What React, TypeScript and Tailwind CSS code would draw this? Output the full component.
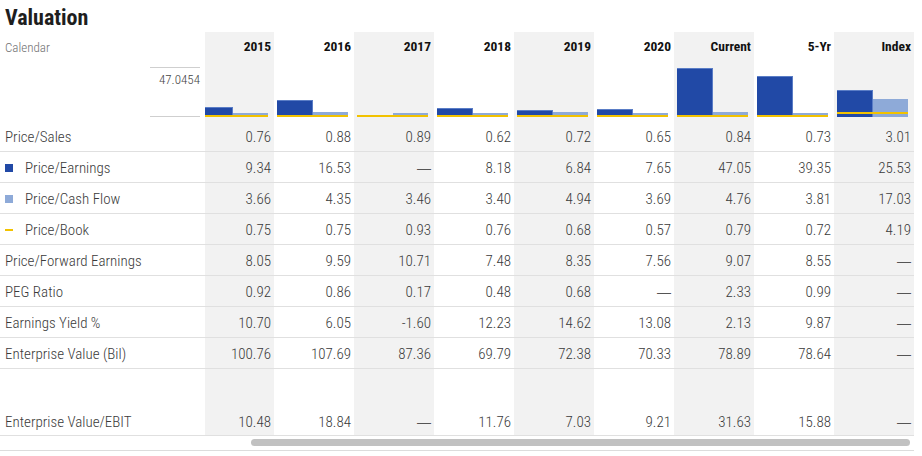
import React from "react";

const FONT = "font-['Roboto_Condensed','Liberation_Sans_Narrow','Arial_Narrow',Roboto,sans-serif]";

const columns = ["2015", "2016", "2017", "2018", "2019", "2020", "Current", "5-Yr", "Index"];
const shaded = [true, false, true, false, true, false, true, false, true];

type Row = { label: string; values: string[]; legend?: "pe" | "pcf" | "pb"; tall?: boolean };

const rows: Row[] = [
  { label: "Price/Sales", values: ["0.76", "0.88", "0.89", "0.62", "0.72", "0.65", "0.84", "0.73", "3.01"] },
  { label: "Price/Earnings", legend: "pe", values: ["9.34", "16.53", "—", "8.18", "6.84", "7.65", "47.05", "39.35", "25.53"] },
  { label: "Price/Cash Flow", legend: "pcf", values: ["3.66", "4.35", "3.46", "3.40", "4.94", "3.69", "4.76", "3.81", "17.03"] },
  { label: "Price/Book", legend: "pb", values: ["0.75", "0.75", "0.93", "0.76", "0.68", "0.57", "0.79", "0.72", "4.19"] },
  { label: "Price/Forward Earnings", values: ["8.05", "9.59", "10.71", "7.48", "8.35", "7.56", "9.07", "8.55", "—"] },
  { label: "PEG Ratio", values: ["0.92", "0.86", "0.17", "0.48", "0.68", "—", "2.33", "0.99", "—"] },
  { label: "Earnings Yield %", values: ["10.70", "6.05", "-1.60", "12.23", "14.62", "13.08", "2.13", "9.87", "—"] },
  { label: "Enterprise Value (Bil)", values: ["100.76", "107.69", "87.36", "69.79", "72.38", "70.33", "78.89", "78.64", "—"] },
  { label: "Enterprise Value/EBIT", tall: true, values: ["10.48", "18.84", "—", "11.76", "7.03", "9.21", "31.63", "15.88", "—"] },
];

const MAX = 47.0454;
const SCALE = 49 / MAX;

function num(v: string) {
  const n = parseFloat(v);
  return isNaN(n) ? 0 : n;
}

function Legend({ kind }: { kind?: Row["legend"] }) {
  if (kind === "pe") return <span className="inline-block h-2 w-2 bg-[#2149a6]" />;
  if (kind === "pcf") return <span className="inline-block h-2 w-2 bg-[#8eaad8]" />;
  if (kind === "pb") return <span className="inline-block h-[2px] w-2 bg-[#f2c200]" />;
  return null;
}

function Bars({ index }: { index: number }) {
  const pe = num(rows[1].values[index]);
  const pcf = num(rows[2].values[index]);
  const pb = num(rows[3].values[index]);
  return (
    <div className="relative flex h-[50px] w-[71px] shrink-0 items-end">
      <div className="w-1/2">
        {pe > 0 && (
          <div
            className="border-r border-t border-[#5a7dc6] bg-[#2149a6]"
            style={{ height: Math.round(pe * SCALE) }}
          />
        )}
      </div>
      <div className="w-1/2">
        <div className="bg-[#8eaad8]" style={{ height: Math.round(pcf * SCALE) }} />
      </div>
      <div
        className="absolute left-0 right-0 h-[2px] bg-[#f2c200]"
        style={{ bottom: Math.max(0, Math.round(pb * SCALE) - 1) }}
      />
    </div>
  );
}

const grid = "grid grid-cols-[150px_55px_69px_repeat(8,80px)] w-[914px]";

export default function App() {
  return (
    <div className={`${FONT} h-[456px] w-[922px] overflow-hidden bg-white text-[#3a3a3a]`}>
      <h2 className="h-8 pl-[5px] pt-[5px] text-[22px] font-bold leading-[26px] text-[#1e1e1e]">Valuation</h2>

      {/* header with chart */}
      <div className={`${grid} h-[89px]`}>
        <div className="pl-[5px] pt-[8px] text-[13px] font-light leading-4 text-[#707070]">Calendar</div>
        <div className="pr-[5px] pt-[35px]">
          <div className="h-[50px] border-y border-[#cfcfcf] pt-[4px] text-right text-[13px] font-light leading-4 text-[#444]">
            47.0454
          </div>
        </div>
        {columns.map((c, i) => (
          <div
            key={c}
            className={`flex flex-col items-end overflow-hidden pb-1 pt-[6px] ${shaded[i] ? "bg-[#f2f2f2]" : ""}`}
          >
            <div className="pr-[3px] text-[13.5px] font-bold leading-4 text-[#111]">{c}</div>
            <div className="mt-[13px] flex w-full justify-end pr-[6px]">
              <Bars index={i} />
            </div>
          </div>
        ))}
      </div>

      {rows.map((r) => (
        <div key={r.label} className={`${grid} ${r.tall ? "h-[67px]" : "h-[31px]"} border-b border-[#e0e0e0]`}>
          <div
            className={`col-span-2 flex pl-[5px] text-[15px] font-light leading-4 ${r.tall ? "items-end pb-[5px]" : "items-center pt-[2px]"}`}
          >
            {r.legend && (
              <span className="inline-flex w-5 items-center">
                <Legend kind={r.legend} />
              </span>
            )}
            {r.label}
          </div>
          {r.values.map((v, i) => (
            <div
              key={i}
              className={`flex justify-end pr-[3px] text-[15px] font-light leading-4 ${r.tall ? "items-end pb-[5px]" : "items-center pt-[2px]"} ${shaded[i] ? "bg-[#f2f2f2]" : ""}`}
            >
              {v === "—" ? (
                <span className="font-['Liberation_Sans',sans-serif] text-[14px] font-normal text-[#555]">—</span>
              ) : (
                v
              )}
            </div>
          ))}
        </div>
      ))}

      {/* scrollbar */}
      <div className="h-[15px] w-[914px] border-b border-[#dcdcdc] pt-[3px]">
        <div className="ml-[251px] h-[7px] w-[659px] rounded-full bg-[#c1c1c1]" />
      </div>
    </div>
  );
}
